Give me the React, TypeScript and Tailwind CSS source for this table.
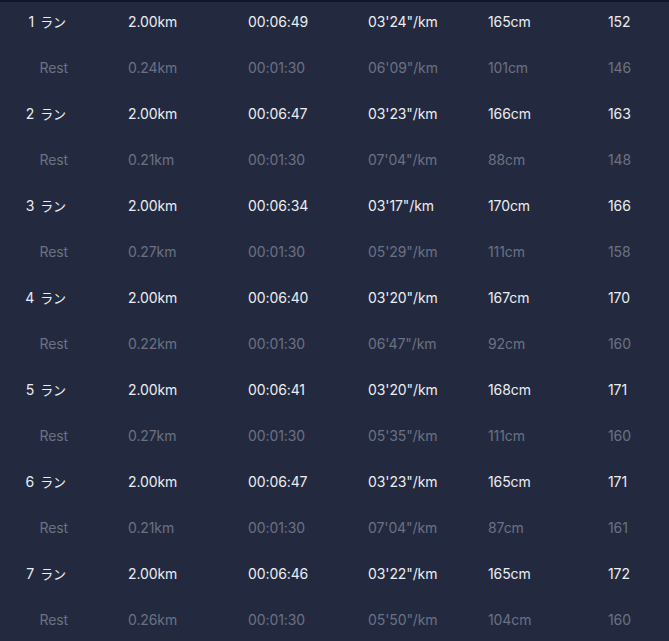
import React from "react";

type Row = { label: string; rest: boolean; d: string; t: string; p: string; s: string; h: string };

const rows: Row[] = [
  { label: "1", rest: false, d: "2.00km", t: "00:06:49", p: "03'24\"/km", s: "165cm", h: "152" },
  { label: "Rest", rest: true, d: "0.24km", t: "00:01:30", p: "06'09\"/km", s: "101cm", h: "146" },
  { label: "2", rest: false, d: "2.00km", t: "00:06:47", p: "03'23\"/km", s: "166cm", h: "163" },
  { label: "Rest", rest: true, d: "0.21km", t: "00:01:30", p: "07'04\"/km", s: "88cm", h: "148" },
  { label: "3", rest: false, d: "2.00km", t: "00:06:34", p: "03'17\"/km", s: "170cm", h: "166" },
  { label: "Rest", rest: true, d: "0.27km", t: "00:01:30", p: "05'29\"/km", s: "111cm", h: "158" },
  { label: "4", rest: false, d: "2.00km", t: "00:06:40", p: "03'20\"/km", s: "167cm", h: "170" },
  { label: "Rest", rest: true, d: "0.22km", t: "00:01:30", p: "06'47\"/km", s: "92cm", h: "160" },
  { label: "5", rest: false, d: "2.00km", t: "00:06:41", p: "03'20\"/km", s: "168cm", h: "171" },
  { label: "Rest", rest: true, d: "0.27km", t: "00:01:30", p: "05'35\"/km", s: "111cm", h: "160" },
  { label: "6", rest: false, d: "2.00km", t: "00:06:47", p: "03'23\"/km", s: "165cm", h: "171" },
  { label: "Rest", rest: true, d: "0.21km", t: "00:01:30", p: "07'04\"/km", s: "87cm", h: "161" },
  { label: "7", rest: false, d: "2.00km", t: "00:06:46", p: "03'22\"/km", s: "165cm", h: "172" },
  { label: "Rest", rest: true, d: "0.26km", t: "00:01:30", p: "05'50\"/km", s: "104cm", h: "160" },
];

export default function App() {
  return (
    <div
      className="w-[669px] h-[641px] overflow-hidden bg-[#232a3f]"
      style={{ fontFamily: "Inter, 'Noto Sans CJK JP', sans-serif" }}
    >
      <div className="h-[2px] bg-[#12162a]" />
      {rows.map((r, i) => (
        <div
          key={i}
          className={
            "flex h-[46px] pt-[10px] text-[14px] leading-[20px] tracking-[-0.1px] " +
            (r.rest ? "text-[#6b7184]" : "text-[#ecedf0]")
          }
        >
          <div className="w-[68px] flex justify-end whitespace-nowrap">
            {r.rest ? (
              <span>Rest</span>
            ) : (
              <span className="flex items-baseline pr-[2px]">
                <span>{r.label}</span>
                <span className="ml-[6px] text-[13px]">ラン</span>
              </span>
            )}
          </div>
          <div className="ml-[60px] w-[120px] whitespace-nowrap">{r.d}</div>
          <div className="w-[120px] whitespace-nowrap">{r.t}</div>
          <div className="w-[120px] whitespace-nowrap">{r.p}</div>
          <div className="w-[120px] whitespace-nowrap">{r.s}</div>
          <div className="w-[61px] whitespace-nowrap">{r.h}</div>
        </div>
      ))}
    </div>
  );
}
